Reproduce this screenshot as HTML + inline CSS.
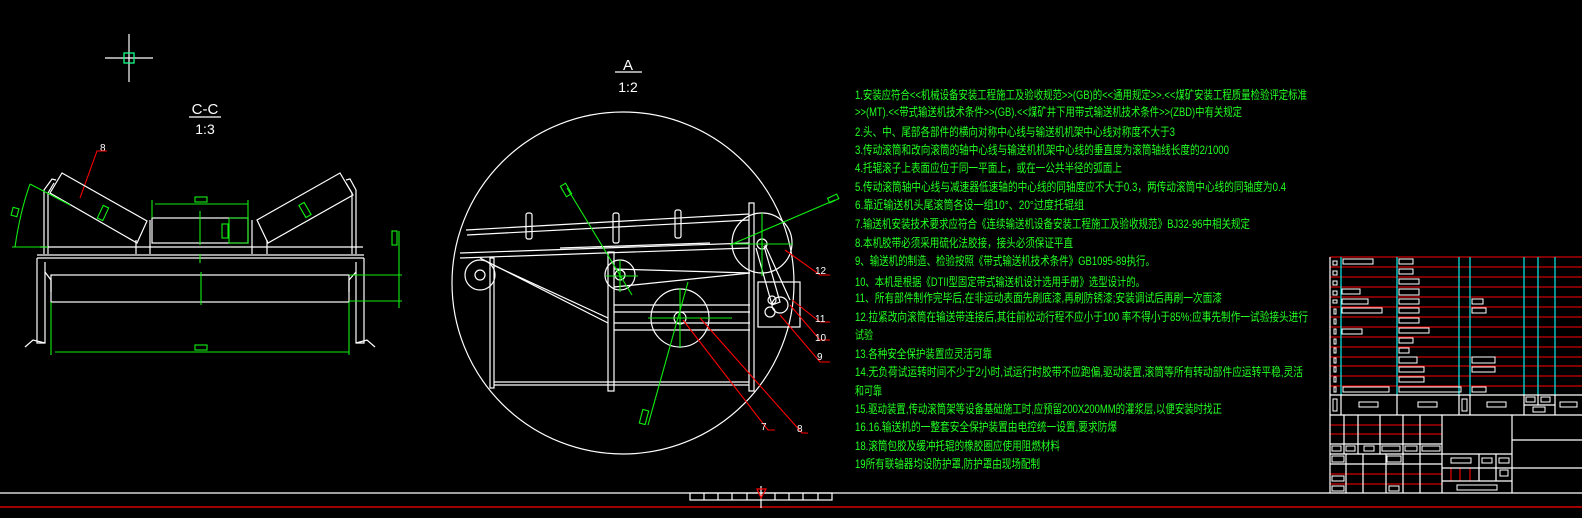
<!DOCTYPE html>
<html><head><meta charset="utf-8"><style>
html,body{margin:0;padding:0;background:#000;width:1582px;height:518px;overflow:hidden}
svg{display:block}
.t{font-family:"Liberation Sans","Noto Sans CJK SC",sans-serif;font-size:12px;fill:#2f2}
.w{stroke:#fff;fill:none;stroke-width:1.2}
.g{stroke:#1e1;fill:none;stroke-width:1.1}
.r{stroke:#f00;fill:none;stroke-width:1.1}
.c{stroke:#0ee;fill:none;stroke-width:1.2}
.lb{font-family:"Liberation Sans",sans-serif;fill:#fff}
</style></head><body>
<svg width="1582" height="518" viewBox="0 0 1582 518" xmlns="http://www.w3.org/2000/svg">
<rect width="1582" height="518" fill="#000"/>
<g class="w"><line x1="105" y1="58" x2="153" y2="58"/><line x1="129" y1="34" x2="129" y2="82"/></g>
<rect x="124" y="53" width="10" height="10" fill="none" stroke="#1f8" stroke-width="1.3"/>

<text x="205" y="114" class="lb" font-size="15" text-anchor="middle">C-C</text>
<line x1="189" y1="117" x2="221" y2="117" class="w"/>
<text x="205" y="134" class="lb" font-size="14" text-anchor="middle">1:3</text>
<text x="100" y="151" class="lb" font-size="10">8</text>
<polyline points="107,151 97,151 80,198" class="r"/>
<g class="w">
<polygon points="62,173 147,221 137,243 50,193"/>
<polygon points="340,173 353,195 268,243 257,220"/>
<rect x="152" y="218" width="96" height="25"/>
<line x1="150" y1="220" x2="150" y2="254"/><line x1="136" y1="240" x2="136" y2="254"/>
<line x1="252" y1="220" x2="252" y2="254"/><line x1="267" y1="240" x2="267" y2="254"/>
<polyline points="44,254 44,190 52,179 56,180"/><polyline points="48,254 48,193 54,183"/>
<polyline points="356,254 356,190 350,179 346,180"/><polyline points="352,254 352,193 346,183"/>
<line x1="40" y1="247" x2="363" y2="247"/>
<line x1="37" y1="255" x2="364" y2="255"/>
<line x1="37" y1="258" x2="364" y2="258"/>
<rect x="51" y="275" width="298" height="27"/>
<polyline points="37,258 37,343 45,343 45,262"/><polyline points="364,258 364,343 356,343 356,262"/>
<polyline points="25,347 33,340 45,343"/><polyline points="375,347 367,340 356,343"/>
<polyline points="45,272 51,280 51,292"/><polyline points="356,272 349,280 349,292"/>
</g>
<g class="g">
<line x1="55" y1="352" x2="349" y2="352"/><line x1="51" y1="302" x2="51" y2="355"/><line x1="349" y1="302" x2="349" y2="355"/>
<line x1="155" y1="204" x2="248" y2="204"/><line x1="152" y1="200" x2="152" y2="218"/><line x1="248" y1="200" x2="248" y2="218"/>
<line x1="200" y1="211" x2="200" y2="245"/><line x1="200" y1="254" x2="200" y2="263"/><line x1="201" y1="272" x2="201" y2="305"/>
<rect x="195" y="197" width="12" height="5"/><rect x="195" y="345" width="12" height="5"/>
<polyline points="229,218 248,218 248,243 229,243 229,218"/><rect x="222" y="224" width="6" height="14"/>
<line x1="399" y1="231" x2="399" y2="308"/><line x1="349" y1="275" x2="402" y2="275"/><line x1="349" y1="301" x2="402" y2="301"/>
<rect x="392" y="231" width="5" height="14"/>
<path d="M30,184 Q20,212 15,247"/><line x1="12" y1="247" x2="48" y2="247"/><line x1="30" y1="184" x2="70" y2="205"/>
<rect x="12" y="208" width="6" height="8" transform="rotate(15 15 212)"/>
<rect x="100" y="206" width="6" height="14" transform="rotate(25 103 213)"/>
<rect x="302" y="203" width="6" height="14" transform="rotate(-30 305 210)"/>
</g>

<text x="628" y="70" class="lb" font-size="15" text-anchor="middle">A</text>
<line x1="615" y1="72" x2="642" y2="72" class="w"/>
<text x="628" y="92" class="lb" font-size="14" text-anchor="middle">1:2</text>
<circle cx="623" cy="283" r="171" class="w"/>
<g class="w">
<line x1="466" y1="230" x2="749" y2="214"/>
<line x1="467" y1="235" x2="749" y2="220"/>
<line x1="460" y1="253" x2="749" y2="243"/>
<line x1="460" y1="258" x2="749" y2="248"/>
<line x1="560" y1="248" x2="710" y2="243"/>
<line x1="614" y1="287" x2="750" y2="273"/>
<line x1="614" y1="269" x2="750" y2="273"/>
<line x1="493" y1="265" x2="608" y2="318"/>
<line x1="480" y1="258" x2="608" y2="323"/>
<rect x="490" y="258" width="4" height="130"/>
<rect x="608" y="252" width="6" height="139"/>
<rect x="749" y="203" width="5" height="188"/>
<line x1="494" y1="382" x2="749" y2="382"/><line x1="494" y1="385" x2="749" y2="385"/>
<line x1="614" y1="305" x2="750" y2="305"/><line x1="614" y1="312" x2="750" y2="312"/>
<line x1="614" y1="323" x2="750" y2="323"/><line x1="614" y1="330" x2="750" y2="330"/>
<circle cx="480" cy="275" r="15"/><circle cx="480" cy="275" r="5"/>
<circle cx="620" cy="275" r="15"/><circle cx="620" cy="275" r="5"/>
<circle cx="680" cy="318" r="29"/><circle cx="680" cy="318" r="6"/>
<circle cx="762" cy="243" r="30"/><circle cx="762" cy="244" r="5"/>
<polyline points="756,248 772,305 780,302 764,246"/><polyline points="765,245 790,300"/>
<rect x="758" y="282" width="42" height="45"/>
<circle cx="780" cy="305" r="8"/><circle cx="770" cy="312" r="5"/><circle cx="772" cy="300" r="4"/>
<rect x="526" y="213" width="6" height="26" rx="2"/><rect x="613" y="213" width="6" height="30" rx="2"/><rect x="675" y="210" width="6" height="28" rx="2"/>
</g>
<g class="g">
<line x1="567" y1="188" x2="632" y2="295"/><rect x="563" y="184" width="6" height="12" transform="rotate(-30 566 190)"/>
<line x1="606" y1="276" x2="638" y2="276"/><line x1="620" y1="260" x2="620" y2="292"/>
<line x1="730" y1="245" x2="835" y2="200"/><rect x="828" y="196" width="10" height="5" transform="rotate(-25 833 198)"/>
<line x1="730" y1="244" x2="793" y2="244"/><line x1="762" y1="213" x2="762" y2="276"/>
<line x1="688" y1="282" x2="648" y2="425"/><rect x="641" y="410" width="6" height="14" transform="rotate(15 644 417)"/>
<line x1="648" y1="318" x2="732" y2="318"/><line x1="680" y1="288" x2="680" y2="348"/>
</g>
<g class="r">
<polyline points="683,320 768,430 775,430"/><polyline points="700,318 802,433 808,433"/>
<polyline points="780,315 820,362 830,362"/><polyline points="790,305 820,340 830,340"/>
<polyline points="792,300 820,322 830,322"/><polyline points="785,250 820,275 830,275"/>
</g>
<g class="lb" font-size="10">
<text x="761" y="430">7</text><text x="797" y="432">8</text><text x="817" y="360">9</text>
<text x="815" y="341">10</text><text x="815" y="322">11</text><text x="815" y="274">12</text>
</g>

<g class="t">
<text x="855" y="99" textLength="452" lengthAdjust="spacingAndGlyphs">1.安装应符合&lt;&lt;机械设备安装工程施工及验收规范&gt;&gt;(GB)的&lt;&lt;通用规定&gt;&gt;.&lt;&lt;煤矿安装工程质量检验评定标准</text>
<text x="855" y="116" textLength="387" lengthAdjust="spacingAndGlyphs">&gt;&gt;(MT).&lt;&lt;带式输送机技术条件&gt;&gt;(GB).&lt;&lt;煤矿井下用带式输送机技术条件&gt;&gt;(ZBD)中有关规定</text>
<text x="855" y="136" textLength="320" lengthAdjust="spacingAndGlyphs">2.头、中、尾部各部件的横向对称中心线与输送机机架中心线对称度不大于3</text>
<text x="855" y="154" textLength="374" lengthAdjust="spacingAndGlyphs">3.传动滚筒和改向滚筒的轴中心线与输送机机架中心线的垂直度为滚筒轴线长度的2/1000</text>
<text x="855" y="172" textLength="267" lengthAdjust="spacingAndGlyphs">4.托辊滚子上表面应位于同一平面上，或在一公共半径的弧面上</text>
<text x="855" y="191" textLength="431" lengthAdjust="spacingAndGlyphs">5.传动滚筒轴中心线与减速器低速轴的中心线的同轴度应不大于0.3，两传动滚筒中心线的同轴度为0.4</text>
<text x="855" y="209" textLength="229" lengthAdjust="spacingAndGlyphs">6.靠近输送机头尾滚筒各设一组10°、20°过度托辊组</text>
<text x="855" y="228" textLength="395" lengthAdjust="spacingAndGlyphs">7.输送机安装技术要求应符合《连续输送机设备安装工程施工及验收规范》BJ32-96中相关规定</text>
<text x="855" y="247" textLength="218" lengthAdjust="spacingAndGlyphs">8.本机胶带必须采用硫化法胶接，接头必须保证平直</text>
<text x="855" y="265" textLength="300" lengthAdjust="spacingAndGlyphs">9、输送机的制造、检验按照《带式输送机技术条件》GB1095-89执行。</text>
<text x="855" y="286" textLength="290" lengthAdjust="spacingAndGlyphs">10、本机是根据《DTII型固定带式输送机设计选用手册》选型设计的。</text>
<text x="855" y="302" textLength="367" lengthAdjust="spacingAndGlyphs">11、所有部件制作完毕后,在非运动表面先刷底漆,再刷防锈漆;安装调试后再刷一次面漆</text>
<text x="855" y="321" textLength="453" lengthAdjust="spacingAndGlyphs">12.拉紧改向滚筒在输送带连接后,其往前松动行程不应小于100   率不得小于85%;应事先制作一试验接头进行</text>
<text x="855" y="339" textLength="18" lengthAdjust="spacingAndGlyphs">试验</text>
<text x="855" y="358" textLength="137" lengthAdjust="spacingAndGlyphs">13.各种安全保护装置应灵活可靠</text>
<text x="855" y="376" textLength="448" lengthAdjust="spacingAndGlyphs">14.无负荷试运转时间不少于2小时,试运行时胶带不应跑偏,驱动装置,滚筒等所有转动部件应运转平稳,灵活</text>
<text x="855" y="395" textLength="27" lengthAdjust="spacingAndGlyphs">和可靠</text>
<text x="855" y="413" textLength="367" lengthAdjust="spacingAndGlyphs">15.驱动装置,传动滚筒架等设备基础施工时,应预留200X200MM的灌浆层,以便安装时找正</text>
<text x="855" y="431" textLength="262" lengthAdjust="spacingAndGlyphs">16.16.输送机的一整套安全保护装置由电控统一设置,要求防爆</text>
<text x="855" y="450" textLength="205" lengthAdjust="spacingAndGlyphs">18.滚筒包胶及缓冲托辊的橡胶圈应使用阻燃材料</text>
<text x="855" y="468" textLength="185" lengthAdjust="spacingAndGlyphs">19所有联轴器均设防护罩,防护罩由现场配制</text>
</g>

<line x1="0" y1="493" x2="1582" y2="493" class="w"/>
<line x1="0" y1="507" x2="1582" y2="507" stroke="#f00" stroke-width="1.3"/>
<g class="w"><rect x="690" y="493" width="142" height="7"/>
<path d="M704,493v7M718,493v7M732,493v7M747,493v7M775,493v7M789,493v7M803,493v7M818,493v7"/>
<line x1="761" y1="486" x2="761" y2="508"/></g>
<polygon points="757,489 766,489 761,498" fill="none" stroke="#f00" stroke-width="1.2"/>

<g class="r">
<path d="M1330,257H1582M1330,267H1582M1330,277H1582M1330,287H1582M1330,297H1582M1330,307H1582M1330,317H1582M1330,327H1582M1330,337H1582M1330,347H1582M1330,357H1582M1330,366H1582M1330,376H1582M1330,386H1582"/>
<path d="M1330,425H1442M1330,434H1442M1330,474H1442M1330,484H1442M1451,468V481M1460,468V481M1470,468V481"/>
</g>
<g class="c"><path d="M1341,257V395M1397,257V395M1459,257V395M1470,257V395M1524,257V395M1538,257V395M1555,257V395"/></g>
<g class="w">
<path d="M1330,257V493M1330,395H1582M1330,415H1582M1341,395V415M1397,395V415M1459,395V415M1470,395V415M1524,395V415M1555,395V415M1538,395V405M1524,405H1555"/>
<path d="M1344,415V454M1358,415V454M1380,415V454M1403,415V454M1420,415V454M1442,415V493M1330,444H1442M1330,454H1512M1330,464H1442"/>
<path d="M1346,454V493M1363,454V493M1386,454V493M1403,454V493M1420,454V493"/>
<path d="M1442,468H1512M1442,481H1512M1479,454V481M1496,454V481M1512,415V493M1512,440H1582M1512,468H1582"/>
<g stroke-width="1">
<rect x="1333" y="261" width="4" height="4"/><rect x="1333" y="271" width="4" height="4"/><rect x="1333" y="281" width="4" height="4"/><rect x="1333" y="291" width="4" height="4"/><rect x="1333" y="300" width="4" height="3"/>
<rect x="1334" y="309" width="2" height="5"/><rect x="1334" y="319" width="2" height="5"/><rect x="1334" y="329" width="2" height="5"/><rect x="1334" y="339" width="2" height="5"/><rect x="1334" y="348" width="2" height="5"/><rect x="1334" y="358" width="2" height="5"/><rect x="1334" y="367" width="2" height="5"/><rect x="1334" y="377" width="2" height="5"/><rect x="1334" y="387" width="2" height="5"/>
<rect x="1343" y="259" width="30" height="5"/><rect x="1342" y="289" width="18" height="5"/><rect x="1342" y="299" width="26" height="5"/><rect x="1342" y="308" width="40" height="5"/><rect x="1342" y="329" width="20" height="5"/><rect x="1343" y="387" width="46" height="5"/>
<rect x="1399" y="259" width="14" height="5"/><rect x="1399" y="269" width="14" height="5"/><rect x="1399" y="279" width="20" height="5"/><rect x="1399" y="289" width="20" height="6"/><rect x="1399" y="299" width="20" height="5"/><rect x="1399" y="308" width="20" height="5"/><rect x="1399" y="318" width="20" height="5"/><rect x="1399" y="328" width="30" height="5"/><rect x="1399" y="338" width="14" height="5"/><rect x="1399" y="348" width="10" height="5"/><rect x="1399" y="357" width="18" height="6"/><rect x="1399" y="367" width="25" height="5"/><rect x="1399" y="377" width="25" height="5"/><rect x="1399" y="387" width="62" height="5"/>
<rect x="1472" y="299" width="11" height="5"/><rect x="1472" y="308" width="14" height="5"/><rect x="1472" y="357" width="23" height="6"/><rect x="1472" y="367" width="23" height="5"/><rect x="1472" y="387" width="14" height="5"/>
<rect x="1333" y="399" width="4" height="12"/><rect x="1359" y="402" width="19" height="5"/><rect x="1418" y="402" width="19" height="5"/><rect x="1462" y="399" width="5" height="12"/><rect x="1487" y="402" width="19" height="5"/><rect x="1526" y="397" width="9" height="5"/><rect x="1541" y="397" width="9" height="5"/><rect x="1533" y="407" width="12" height="5"/><rect x="1560" y="402" width="17" height="5"/>
<rect x="1332" y="446" width="9" height="5"/><rect x="1346" y="446" width="9" height="5"/><rect x="1364" y="446" width="10" height="5"/><rect x="1382" y="446" width="18" height="5"/><rect x="1405" y="446" width="12" height="5"/><rect x="1422" y="446" width="18" height="5"/>
<rect x="1332" y="456" width="12" height="6"/><rect x="1387" y="456" width="14" height="6"/><rect x="1332" y="476" width="12" height="5"/><rect x="1332" y="486" width="12" height="5"/><rect x="1389" y="486" width="10" height="5"/>
<rect x="1451" y="458" width="20" height="5"/><rect x="1482" y="458" width="10" height="5"/><rect x="1499" y="458" width="10" height="5"/><rect x="1500" y="470" width="8" height="6"/><rect x="1457" y="485" width="40" height="5"/>
</g>
</g>
</svg>
</body></html>
